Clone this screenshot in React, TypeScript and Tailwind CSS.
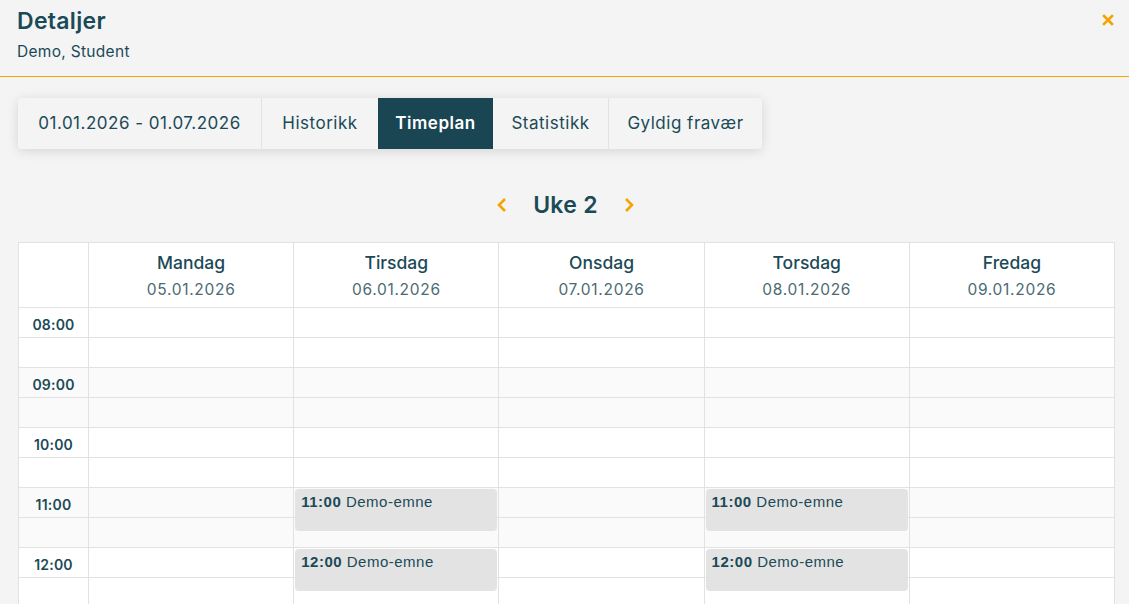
import React from "react";

const days = [
  { name: "Mandag", date: "05.01.2026" },
  { name: "Tirsdag", date: "06.01.2026" },
  { name: "Onsdag", date: "07.01.2026" },
  { name: "Torsdag", date: "08.01.2026" },
  { name: "Fredag", date: "09.01.2026" },
];

const hours = ["08:00", "09:00", "10:00", "11:00", "12:00"];

const events: Record<number, { time: string; title: string; top: number }[]> = {
  1: [
    { time: "11:00", title: "Demo-emne", top: 181 },
    { time: "12:00", title: "Demo-emne", top: 241 },
  ],
  3: [
    { time: "11:00", title: "Demo-emne", top: 181 },
    { time: "12:00", title: "Demo-emne", top: 241 },
  ],
};

function Rows({ withLabel }: { withLabel?: boolean }) {
  return (
    <>
      {hours.map((h, i) => (
        <React.Fragment key={h}>
          <div
            className={`h-[30px] border-b border-[#e2e2e2] flex items-center justify-center ${
              i % 2 === 1 ? "bg-[#fafafa]" : "bg-white"
            }`}
          >
            {withLabel && (
              <span className="text-[14px] font-semibold tracking-[0.2px] text-[#1b4a57] mt-[3px]">{h}</span>
            )}
          </div>
          <div
            className={`h-[30px] border-b border-[#e2e2e2] ${
              i % 2 === 1 ? "bg-[#fafafa]" : "bg-white"
            }`}
          />
        </React.Fragment>
      ))}
    </>
  );
}

export default function App() {
  const tabs = [
    { label: "01.01.2026 - 01.07.2026", w: "w-[244px]" },
    { label: "Historikk", w: "w-[116px]" },
    { label: "Timeplan", w: "w-[115px]", active: true },
    { label: "Statistikk", w: "w-[116px]" },
    { label: "Gyldig fravær", w: "w-[153px]" },
  ];
  return (
    <div className="min-h-screen bg-[#f4f4f4] font-['Inter','Liberation_Sans',sans-serif] text-[#1b4a57] overflow-hidden h-[604px]">
      <div className="relative h-[77px] border-b border-[#f5a300] px-[17px] pt-[6px]">
        <div className="text-[23px] font-semibold tracking-[0.3px] leading-[30px]">Detaljer</div>
        <div className="text-[15.5px] tracking-[0.3px] mt-[6px] leading-[20px]">Demo, Student</div>
        <button className="absolute right-[15px] top-[14px] text-[#f5a300]">
          <svg width="12" height="12" viewBox="0 0 12 12">
            <path d="M2 2L10 10M10 2L2 10" stroke="currentColor" strokeWidth="2.6" strokeLinecap="square" />
          </svg>
        </button>
      </div>

      <div className="pl-[18px] pt-[21px]">
        <div className="inline-flex h-[51px] rounded-[4px] bg-[#f4f4f4] shadow-[0_2px_12px_rgba(0,0,0,0.13)] overflow-hidden">
          {tabs.map((t, i) => (
            <div
              key={t.label}
              className={`${t.w} flex items-center justify-center text-[17px] tracking-[0.5px] ${
                t.active ? "bg-[#1a4654] text-white font-semibold" : ""
              } ${i === 0 || i === 3 ? "border-r border-[#e3e3e3]" : ""}`}
            >
              {t.label}
            </div>
          ))}
        </div>
      </div>

      <div className="flex items-center justify-center h-[50px] mt-[31px] gap-[25px]">
        <svg width="12" height="16" viewBox="0 0 12 16" className="text-[#f5a300] ml-[2px]">
          <path d="M9 2L3 8L9 14" stroke="currentColor" strokeWidth="2.6" fill="none" />
        </svg>
        <span className="text-[23px] font-semibold tracking-[0.3px]">Uke 2</span>
        <svg width="12" height="16" viewBox="0 0 12 16" className="text-[#f5a300]">
          <path d="M3 2L9 8L3 14" stroke="currentColor" strokeWidth="2.6" fill="none" />
        </svg>
      </div>

      <div className="mx-[18px] mt-[12px] w-[1097px] border-t border-l border-[#e2e2e2] bg-white flex">
        <div className="w-[70px] border-r border-[#e2e2e2] shrink-0">
          <div className="h-[65px] border-b border-[#e2e2e2]" />
          <Rows withLabel />
        </div>
        {days.map((d, di) => (
          <div key={d.name} className="flex-1 border-r border-[#e2e2e2]">
            <div className="h-[65px] border-b border-[#e2e2e2] flex flex-col items-center pt-[8px]">
              <div className="text-[17.5px] font-medium leading-[24px]">{d.name}</div>
              <div className="text-[15.5px] leading-[22px] mt-[4px] tracking-[0.7px] text-[#4b6a73]">{d.date}</div>
            </div>
            <div className="relative">
              <Rows />
              {(events[di] || []).map((e) => (
                <div
                  key={e.time}
                  className="absolute left-[1px] right-[1px] h-[42px] rounded-[4px] bg-[#e3e3e3] px-[6px] pt-[3px] text-[15px] tracking-[0.5px] font-['Liberation_Sans',sans-serif] leading-[19px]"
                  style={{ top: e.top }}
                >
                  <span className="font-bold">{e.time}</span> {e.title}
                </div>
              ))}
            </div>
          </div>
        ))}
      </div>
    </div>
  );
}
